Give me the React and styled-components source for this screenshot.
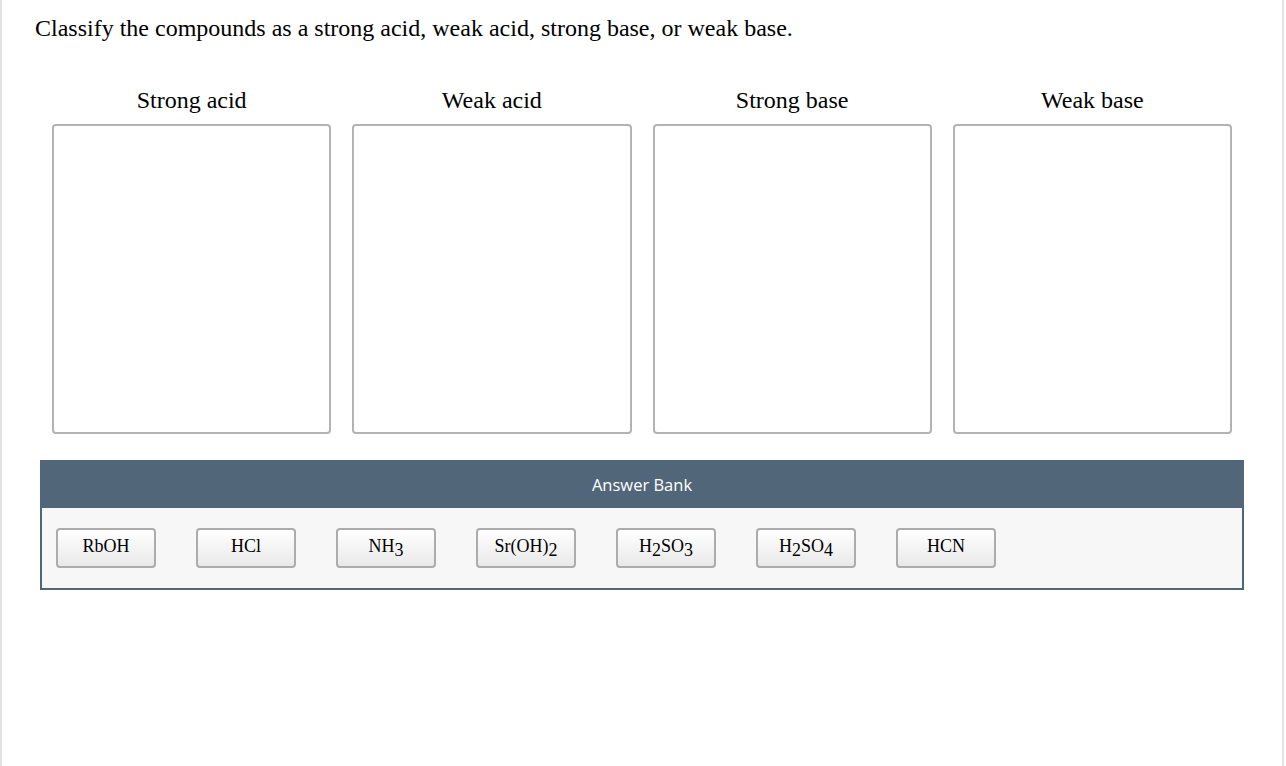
import styled, { createGlobalStyle } from 'styled-components';

const GlobalStyle = createGlobalStyle`
  html, body {
    margin: 0;
    padding: 0;
    background: #ffffff;
  }
`;

const Page = styled.div`
  box-sizing: border-box;
  width: 1284px;
  min-height: 766px;
  border-left: 2px solid #e2e2e2;
  border-right: 2px solid #e2e2e2;
  font-family: "Liberation Serif", "Times New Roman", serif;
  color: #000;
`;

const Prompt = styled.h1`
  margin: 0;
  padding: 14px 0 0 33px;
  font-size: 24px;
  font-weight: normal;
  line-height: 28px;
`;

const Workspace = styled.div`
  margin: 44px 0 0 38px;
  width: 1204px;
`;

const Columns = styled.div`
  display: grid;
  grid-template-columns: repeat(4, 1fr);
  column-gap: 21px;
  padding: 0 12px;
`;

const Column = styled.div`
  display: flex;
  flex-direction: column;
  align-items: center;
`;

const ColumnTitle = styled.div`
  font-size: 24px;
  line-height: 28px;
  height: 28px;
  margin-bottom: 10px;
`;

const DropZone = styled.div`
  box-sizing: border-box;
  width: 100%;
  height: 310px;
  border: 2px solid #b3b3b3;
  border-radius: 4px;
  background: #fff;
`;

const Bank = styled.div`
  margin-top: 26px;
  border: 2px solid #52667a;
  border-top: none;
`;

const BankHeader = styled.div`
  background: #52667a;
  color: #fff;
  height: 48px;
  display: flex;
  align-items: center;
  justify-content: center;
  font-family: "Open Sans", "Noto Sans", sans-serif;
  font-size: 16.5px;
  margin: 0 -2px;
`;

const Tray = styled.div`
  background: #f7f7f7;
  display: flex;
  gap: 40px;
  padding: 20px 14px 20px;
`;

const Chip = styled.div`
  box-sizing: border-box;
  width: 100px;
  height: 40px;
  border: 2px solid #acacac;
  border-radius: 4px;
  background: linear-gradient(#ffffff, #e9e9e9);
  text-align: center;
  padding-top: 5px;
  font-size: 18px;
  line-height: 22px;
`;

const Sub = styled.sub`
  font-size: 100%;
  vertical-align: -4px;
  line-height: 0;
`;

const categories = ['Strong acid', 'Weak acid', 'Strong base', 'Weak base'];

const compounds = [
  ['RbOH'],
  ['HCl'],
  ['NH', '3'],
  ['Sr(OH)', '2'],
  ['H', '2', 'SO', '3'],
  ['H', '2', 'SO', '4'],
  ['HCN'],
];

function Formula({ parts }) {
  return parts.map((p, i) => (i % 2 ? <Sub key={i}>{p}</Sub> : <span key={i}>{p}</span>));
}

export default function App() {
  return (
    <>
      <GlobalStyle />
      <Page>
        <Prompt>Classify the compounds as a strong acid, weak acid, strong base, or weak base.</Prompt>
        <Workspace>
          <Columns>
            {categories.map((c) => (
              <Column key={c}>
                <ColumnTitle>{c}</ColumnTitle>
                <DropZone />
              </Column>
            ))}
          </Columns>
          <Bank>
            <BankHeader>Answer Bank</BankHeader>
            <Tray>
              {compounds.map((parts) => (
                <Chip key={parts.join('')}>
                  <Formula parts={parts} />
                </Chip>
              ))}
            </Tray>
          </Bank>
        </Workspace>
      </Page>
    </>
  );
}
